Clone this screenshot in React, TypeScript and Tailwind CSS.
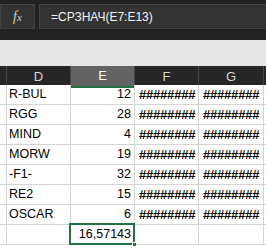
import React from "react";

const rows: [string, string][] = [
  ["R-BUL", "12"],
  ["RGG", "28"],
  ["MIND", "4"],
  ["MORW", "19"],
  ["-F1-", "32"],
  ["RE2", "15"],
  ["OSCAR", "6"],
];

const cell = "border-r border-b border-[#d4d4d4] h-[20px] flex items-center";
const hashes = "########";

const App: React.FC = () => {
  return (
    <div className="w-[266px] h-[250px] overflow-hidden bg-white font-['Liberation_Sans',Arial,sans-serif] text-black">
      {/* formula bar */}
      <div className="h-[40px] bg-[#222222] flex items-start pt-[4px] gap-[4px]">
        <div className="w-[35px] h-[25px] bg-[#333333] border border-[#424242] flex items-center justify-center">
          <span className="font-['Liberation_Serif',serif] italic text-[14px] text-[#cfcfcf] leading-none">
            f<span className="text-[11px]">x</span>
          </span>
        </div>
        <div className="flex-1 h-[25px] bg-[#333333] border border-[#424242] border-r-0 flex items-center pl-[11px]">
          <span className="text-[12px] text-[#f2f2f2] leading-none">=СРЗНАЧ(E7:E13)</span>
        </div>
      </div>
      <div className="h-[26px] bg-[#e6e6e6]" />

      {/* column headers */}
      <div className="grid grid-cols-[7px_64px_64px_64px_65px_1fr] h-[19px] bg-[#262626] text-[13px] text-[#d6d6d6]">
        <div className="border-r border-[#454545]" />
        <div className="border-r border-[#454545] flex items-center justify-center">D</div>
        <div className="border-r border-[#454545] border-b-2 border-b-[#217346] bg-[#636363] flex items-center justify-center text-white">
          E
        </div>
        <div className="border-r border-[#454545] flex items-center justify-center">F</div>
        <div className="border-r border-[#454545] flex items-center justify-center">G</div>
        <div />
      </div>

      {/* body */}
      <div className="grid grid-cols-[7px_64px_64px_64px_65px_1fr] text-[12.5px]">
        {rows.map(([name, val]) => (
          <React.Fragment key={name}>
            <div className={cell} />
            <div className={`${cell} pl-[2px]`}>{name}</div>
            <div className={`${cell} justify-end pr-[3px]`}>{val}</div>
            <div className={`${cell} pl-[4px] text-[13px] tracking-[-0.2px] font-bold`}>{hashes}</div>
            <div className={`${cell} pl-[4px] text-[13px] tracking-[-0.2px] font-bold`}>{hashes}</div>
            <div className="border-b border-[#d4d4d4] h-[20px]" />
          </React.Fragment>
        ))}
        <div className={cell} />
        <div className={cell} />
        <div className={`${cell} relative justify-end pr-[3px]`}>
          16,57143
          <div className="absolute -left-[2px] -top-[2px] -right-[1px] -bottom-[1px] border-2 border-[#217346]" />
          <div className="absolute -right-[3px] -bottom-[3px] w-[5px] h-[5px] bg-[#217346] border border-white" />
        </div>
        <div className={cell} />
        <div className={cell} />
        <div className="border-b border-[#d4d4d4] h-[20px]" />
      </div>
    </div>
  );
};

export default App;
